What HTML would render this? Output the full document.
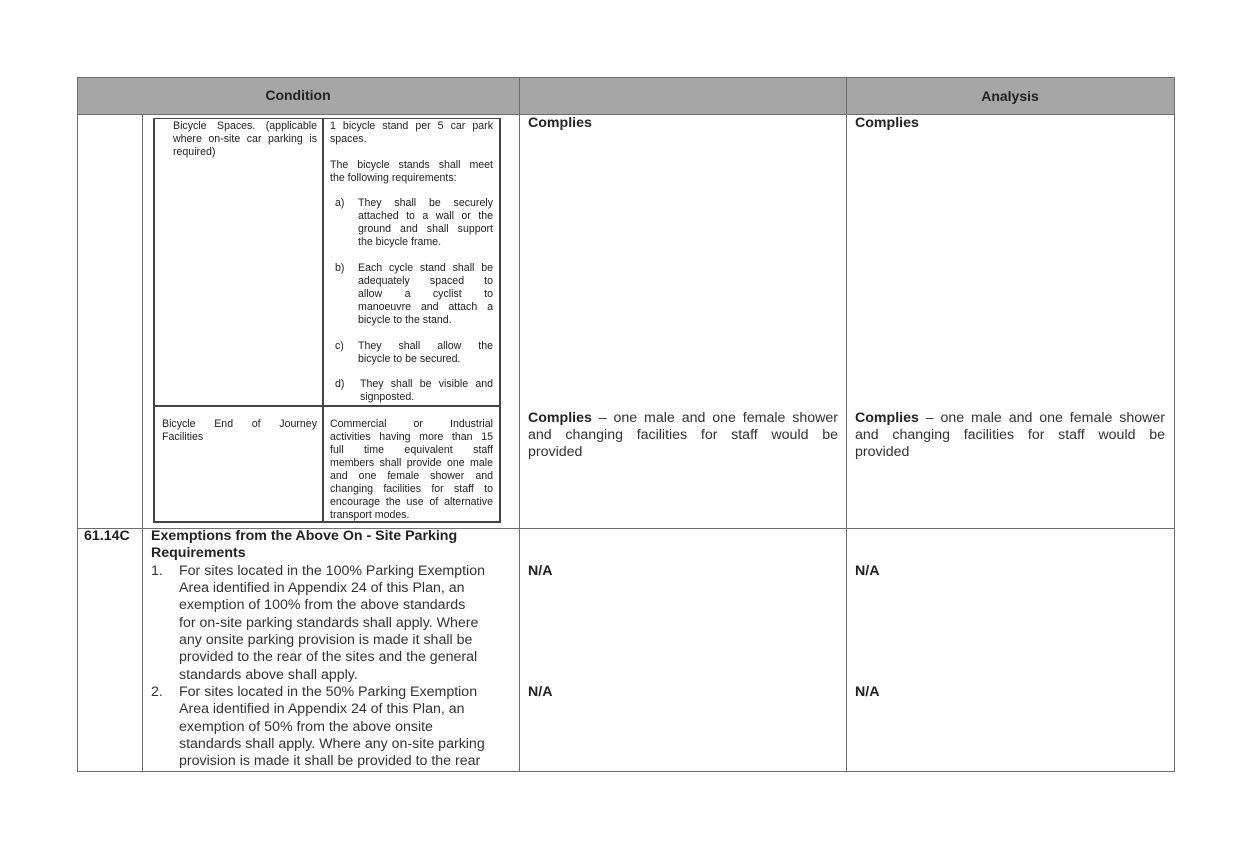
<!DOCTYPE html>
<html><head><meta charset="utf-8"><style>
body{margin:0;width:1250px;height:863px;background:#fff;position:relative;overflow:hidden;font-family:"Liberation Sans",Arial,sans-serif;color:#222}
.a{position:absolute;white-space:nowrap}
.l{position:absolute;background:#6e6e6e}
.i{position:absolute;font-size:10.6px;line-height:13px;white-space:nowrap;color:#222}
.j{text-align:justify;text-align-last:justify;white-space:normal}
.g{position:absolute;font-size:14.2px;line-height:17px;white-space:nowrap;color:#333}
.b{font-weight:bold;color:#222}
</style></head><body>
<div style="position:absolute;left:77px;top:77px;width:1097px;height:37px;background:#a6a6a6"></div>
<!-- outer lines -->
<div class="l" style="left:77px;top:77px;width:1098px;height:1px"></div>
<div class="l" style="left:77px;top:114px;width:1098px;height:1px"></div>
<div class="l" style="left:77px;top:528px;width:1098px;height:1px"></div>
<div class="l" style="left:77px;top:771px;width:1098px;height:1px"></div>
<div class="l" style="left:77px;top:77px;width:1px;height:695px"></div>
<div class="l" style="left:142px;top:114px;width:1px;height:658px"></div>
<div class="l" style="left:519px;top:77px;width:1px;height:695px"></div>
<div class="l" style="left:846px;top:77px;width:1px;height:695px"></div>
<div class="l" style="left:1174px;top:77px;width:1px;height:695px"></div>
<div class="a b" style="left:77px;width:442px;top:87px;text-align:center;font-size:14px">Condition</div>
<div class="a b" style="left:846px;width:328px;top:88px;text-align:center;font-size:14px">Analysis</div>
<!-- inner table -->
<div class="l" style="left:153px;top:118px;width:348px;height:1px;background:#444"></div>
<div class="l" style="left:153px;top:405px;width:348px;height:2px;background:#444"></div>
<div class="l" style="left:153px;top:521px;width:348px;height:2px;background:#444"></div>
<div class="l" style="left:153px;top:118px;width:2px;height:405px;background:#444"></div>
<div class="l" style="left:322px;top:118px;width:2px;height:405px;background:#444"></div>
<div class="l" style="left:499px;top:118px;width:2px;height:405px;background:#444"></div>
<div class="i j" style="left:173px;top:120px;width:144px">Bicycle Spaces. (applicable</div>
<div class="i j" style="left:173px;top:133px;width:144px">where on-site car parking is</div>
<div class="i" style="left:173px;top:146px">required)</div>
<div class="i j" style="left:330px;top:120px;width:163px">1 bicycle stand per 5 car park</div>
<div class="i" style="left:330px;top:133px">spaces.</div>
<div class="i j" style="left:330px;top:159px;width:163px">The bicycle stands shall meet</div>
<div class="i" style="left:330px;top:172px">the following requirements:</div>
<div class="i" style="left:335px;top:197px">a)</div>
<div class="i j" style="left:358px;top:197px;width:135px">They shall be securely</div>
<div class="i j" style="left:358px;top:210px;width:135px">attached to a wall or the</div>
<div class="i j" style="left:358px;top:223px;width:135px">ground and shall support</div>
<div class="i" style="left:358px;top:236px">the bicycle frame.</div>
<div class="i" style="left:335px;top:262px">b)</div>
<div class="i j" style="left:358px;top:262px;width:135px">Each cycle stand shall be</div>
<div class="i j" style="left:358px;top:275px;width:135px">adequately spaced to</div>
<div class="i j" style="left:358px;top:288px;width:135px">allow a cyclist to</div>
<div class="i j" style="left:358px;top:301px;width:135px">manoeuvre and attach a</div>
<div class="i" style="left:358px;top:314px">bicycle to the stand.</div>
<div class="i" style="left:335px;top:340px">c)</div>
<div class="i j" style="left:358px;top:340px;width:135px">They shall allow the</div>
<div class="i" style="left:358px;top:353px">bicycle to be secured.</div>
<div class="i" style="left:335px;top:378px">d)</div>
<div class="i j" style="left:360px;top:378px;width:133px">They shall be visible and</div>
<div class="i" style="left:360px;top:391px">signposted.</div>
<div class="i j" style="left:162px;top:418px;width:155px">Bicycle End of Journey</div>
<div class="i" style="left:162px;top:431px">Facilities</div>
<div class="i j" style="left:330px;top:418px;width:163px">Commercial or Industrial</div>
<div class="i j" style="left:330px;top:431px;width:163px">activities having more than 15</div>
<div class="i j" style="left:330px;top:444px;width:163px">full time equivalent staff</div>
<div class="i j" style="left:330px;top:457px;width:163px">members shall provide one male</div>
<div class="i j" style="left:330px;top:470px;width:163px">and one female shower and</div>
<div class="i j" style="left:330px;top:483px;width:163px">changing facilities for staff to</div>
<div class="i j" style="left:330px;top:496px;width:163px">encourage the use of alternative</div>
<div class="i" style="left:330px;top:509px">transport modes.</div>
<!-- analysis cols row1 -->
<div class="g b" style="left:528px;top:115px">Complies</div>
<div class="g b" style="left:855px;top:115px">Complies</div>
<div class="g j" style="left:528px;top:410px;width:310px"><span class="b">Complies</span> – one male and one female shower</div>
<div class="g j" style="left:528px;top:427px;width:310px">and changing facilities for staff would be</div>
<div class="g" style="left:528px;top:444px">provided</div>
<div class="g j" style="left:855px;top:410px;width:310px"><span class="b">Complies</span> – one male and one female shower</div>
<div class="g j" style="left:855px;top:427px;width:310px">and changing facilities for staff would be</div>
<div class="g" style="left:855px;top:444px">provided</div>
<!-- row 2 -->
<div class="g b" style="left:84px;top:528px">61.14C</div>
<div class="g b" style="left:151px;top:528px">Exemptions from the Above On - Site Parking</div>
<div class="g b" style="left:151px;top:545px">Requirements</div>
<div class="g" style="left:151px;top:563px">1.</div>
<div class="g" style="left:179px;top:563px">For sites located in the 100% Parking Exemption</div>
<div class="g" style="left:179px;top:580px">Area identified in Appendix 24 of this Plan, an</div>
<div class="g" style="left:179px;top:597px">exemption of 100% from the above standards</div>
<div class="g" style="left:179px;top:615px">for on-site parking standards shall apply. Where</div>
<div class="g" style="left:179px;top:632px">any onsite parking provision is made it shall be</div>
<div class="g" style="left:179px;top:649px">provided to the rear of the sites and the general</div>
<div class="g" style="left:179px;top:667px">standards above shall apply.</div>
<div class="g" style="left:151px;top:684px">2.</div>
<div class="g" style="left:179px;top:684px">For sites located in the 50% Parking Exemption</div>
<div class="g" style="left:179px;top:701px">Area identified in Appendix 24 of this Plan, an</div>
<div class="g" style="left:179px;top:719px">exemption of 50% from the above onsite</div>
<div class="g" style="left:179px;top:736px">standards shall apply. Where any on-site parking</div>
<div class="g" style="left:179px;top:753px">provision is made it shall be provided to the rear</div>
<div class="g b" style="left:528px;top:563px">N/A</div>
<div class="g b" style="left:855px;top:563px">N/A</div>
<div class="g b" style="left:528px;top:684px">N/A</div>
<div class="g b" style="left:855px;top:684px">N/A</div>
</body></html>
